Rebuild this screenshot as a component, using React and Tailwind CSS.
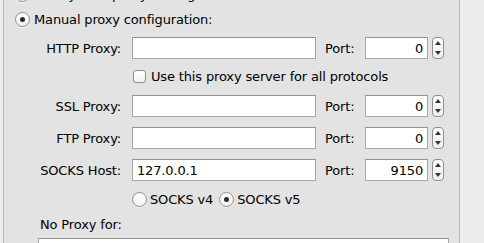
import React from 'react'

function Radio({ checked }) {
  return (
    <span className="flex h-[15px] w-[15px] shrink-0 items-center justify-center rounded-full border border-[#8e8e8e] bg-gradient-to-b from-white to-[#f1f1f1] shadow-[0_1px_0_rgba(255,255,255,0.6)]">
      {checked && <span className="h-[5px] w-[5px] rounded-full bg-[#2b2b2b]" />}
    </span>
  )
}

function Stepper() {
  return (
    <div className="ml-[4px] flex h-[22px] w-[12px] flex-col items-center justify-between rounded-[4px] border border-[#8e8e8e] bg-gradient-to-b from-white to-[#eeeeee] py-[3px]">
      <span className="h-0 w-0 border-x-[3px] border-b-[4px] border-x-transparent border-b-[#333]" />
      <span className="h-0 w-0 border-x-[3px] border-t-[4px] border-x-transparent border-t-[#333]" />
    </div>
  )
}

function ProxyRow({ label, host = '', port = '0' }) {
  return (
    <div className="flex h-[22px] items-center">
      <div className="w-[117px] text-right">{label}</div>
      <div className="ml-[11px] flex h-[22px] w-[184px] items-center border border-[#a5a5a5] border-t-[#8f8f8f] bg-white pl-[4px]">
        {host}
      </div>
      <div className="ml-[9px] w-[40px]">Port:</div>
      <div className="flex h-[22px] w-[63px] items-center justify-end border border-[#a5a5a5] border-t-[#8f8f8f] bg-white pr-[4px]">
        {port}
      </div>
      <Stepper />
    </div>
  )
}

export default function App() {
  return (
    <div className="flex h-[243px] w-[484px] overflow-hidden bg-[#ececec] font-['DejaVu_Sans',sans-serif] text-[13px] leading-[15px] tracking-[-0.15px] text-black">
      <div className="ml-[3px] flex w-[457px] shrink-0 flex-col border-x border-[#b9b9b9] bg-[#e3e3e3]">
        {/* previous option, scrolled mostly out of view */}
        <div className="ml-[11px] mt-[-13px] flex h-[15px] items-center gap-[4px]">
          <Radio />
          <span>Use system proxy settings</span>
        </div>

        <div className="ml-[11px] mt-[10px] flex h-[15px] items-center gap-[4px]">
          <Radio checked />
          <span>Manual proxy configuration:</span>
        </div>

        <div className="mt-[10px]">
          <ProxyRow label="HTTP Proxy:" />
        </div>

        <div className="ml-[129px] mt-[11px] flex h-[13px] items-center gap-[5px]">
          <span className="h-[13px] w-[13px] shrink-0 rounded-[3px] border border-[#8e8e8e] bg-gradient-to-b from-white to-[#f1f1f1]" />
          <span>Use this proxy server for all protocols</span>
        </div>

        <div className="mt-[12px]">
          <ProxyRow label="SSL Proxy:" />
        </div>
        <div className="mt-[10px]">
          <ProxyRow label="FTP Proxy:" />
        </div>
        <div className="mt-[10px]">
          <ProxyRow label="SOCKS Host:" host="127.0.0.1" port="9150" />
        </div>

        <div className="ml-[128px] mt-[11px] flex h-[15px] items-center">
          <Radio />
          <span className="ml-[3px]">SOCKS v4</span>
          <span className="ml-[6px]">
            <Radio checked />
          </span>
          <span className="ml-[3px]">SOCKS v5</span>
        </div>

        <div className="ml-[36px] mt-[10px] h-[15px]">No Proxy for:</div>

        <div className="ml-[34px] mt-[6px] h-[40px] w-[411px] shrink-0 border border-[#a5a5a5] border-t-[#8f8f8f] bg-white" />
      </div>
    </div>
  )
}
